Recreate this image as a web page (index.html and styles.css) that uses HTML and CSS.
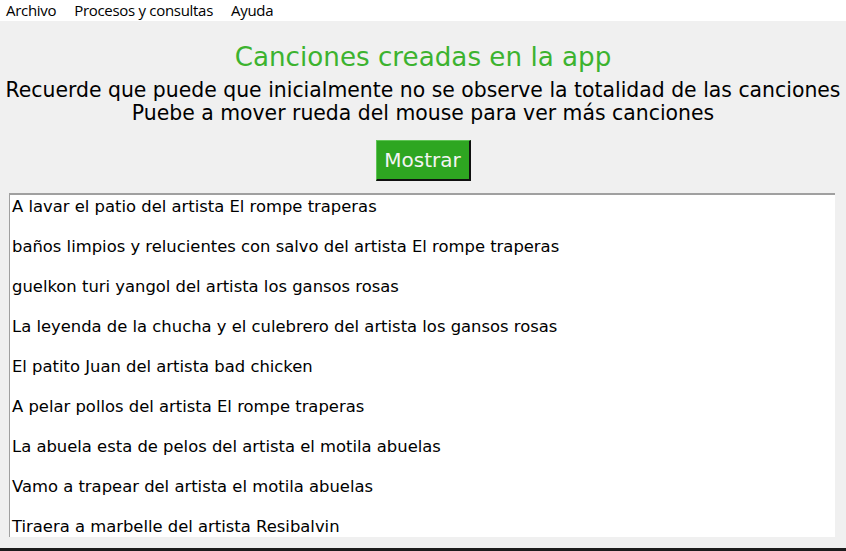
FILE: index.html
```html
<!DOCTYPE html>
<html lang="es">
<head>
<meta charset="utf-8">
<link rel="stylesheet" href="styles.css">
</head>
<body>
<div class="window">
  <nav class="menubar">
    <span class="menu-item">Archivo</span>
    <span class="menu-item">Procesos y consultas</span>
    <span class="menu-item">Ayuda</span>
  </nav>
  <main class="content">
    <h1 class="title">Canciones creadas en la app</h1>
    <p class="note">Recuerde que puede que inicialmente no se observe la totalidad de las canciones<br>Puebe a mover rueda del mouse para ver más canciones</p>
    <button class="btn">Mostrar</button>
    <ul class="listbox">
      <li>A lavar el patio del artista El rompe traperas</li>
      <li>baños limpios y relucientes con salvo del artista El rompe traperas</li>
      <li>guelkon turi yangol del artista los gansos rosas</li>
      <li>La leyenda de la chucha y el culebrero del artista los gansos rosas</li>
      <li>El patito Juan del artista bad chicken</li>
      <li>A pelar pollos del artista El rompe traperas</li>
      <li>La abuela esta de pelos del artista el motila abuelas</li>
      <li>Vamo a trapear del artista el motila abuelas</li>
      <li>Tiraera a marbelle del artista Resibalvin</li>
    </ul>
  </main>
  <div class="bottom-edge"></div>
</div>
</body>
</html>
```
FILE: styles.css
```css
* { box-sizing: border-box; }
html, body { margin: 0; padding: 0; }
body {
  width: 846px;
  height: 551px;
  overflow: hidden;
  background: #f0f0f0;
  font-family: "DejaVu Sans", Verdana, sans-serif;
}
.window {
  display: flex;
  flex-direction: column;
  height: 551px;
}
.menubar {
  height: 21px;
  background: #ffffff;
  display: flex;
  align-items: center;
  gap: 18px;
  padding-left: 6px;
  font-family: "Open Sans", "Noto Sans", sans-serif;
  font-size: 15px;
  color: #000;
}
.menu-item {
  line-height: 21px;
  letter-spacing: -0.3px;
}
.content {
  flex: 1;
  display: flex;
  flex-direction: column;
  align-items: center;
  overflow: hidden;
}
.title {
  margin: 20px 0 0;
  font-weight: normal;
  font-size: 26.2px;
  line-height: 32px;
  color: #3cb32f;
}
.note {
  margin: 6px 0 0;
  font-size: 20.4px;
  line-height: 23px;
  text-align: center;
  color: #000;
  white-space: nowrap;
}
.btn {
  margin-top: 15px;
  width: 95px;
  height: 41px;
  background: #2ea621;
  color: #f4f4f4;
  font-family: "DejaVu Sans", Verdana, sans-serif;
  font-size: 20px;
  border: 1px solid;
  border-color: #5fc455 #101010 #101010 #5fc455;
  border-right-width: 2px;
  border-bottom-width: 2px;
  padding: 0;
}
.listbox {
  list-style: none;
  margin: 12px 0 0;
  align-self: flex-start;
  margin-left: 9px;
  width: 826px;
  height: 344px;
  background: #fff;
  border-top: 2px solid #a0a0a0;
  border-left: 1px solid #a0a0a0;
  padding: 2px 0 0 2px;
  overflow: hidden;
  font-size: 16.4px;
  color: #000;
}
.listbox li {
  height: 20px;
  line-height: 20px;
  margin-bottom: 20px;
  white-space: nowrap;
}
.bottom-edge {
  height: 3px;
  margin-top: 11px;
  background: #1c1c1c;
}
```
